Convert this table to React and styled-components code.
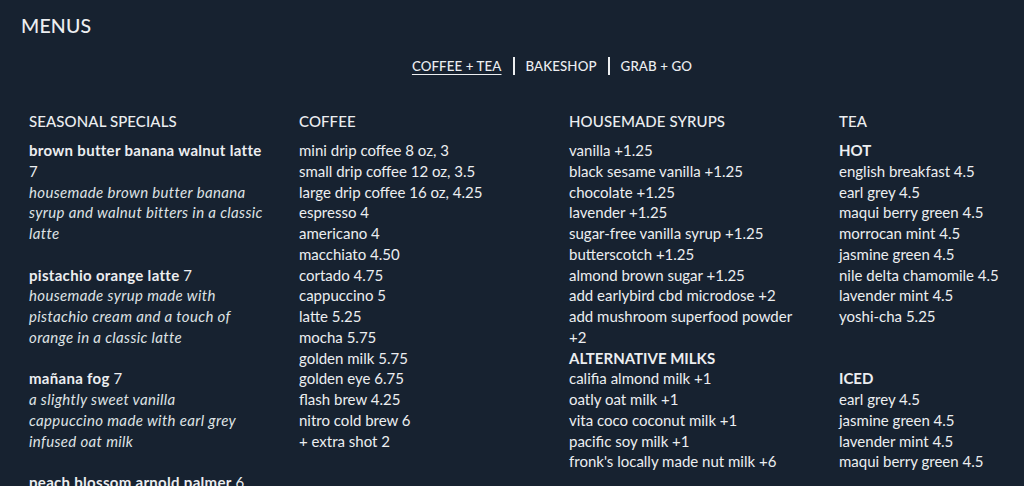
import React from 'react';
import styled, { createGlobalStyle } from 'styled-components';

const GlobalStyle = createGlobalStyle`
  html, body {
    margin: 0;
    padding: 0;
    background-color: #172230;
    overflow: hidden;
  }
  body {
    font-family: Lato, "Open Sans", sans-serif;
    color: #eceef0;
  }
`;

const Page = styled.div`
  width: 1024px;
  height: 486px;
  overflow: hidden;
  background-color: #172230;
`;

const Title = styled.h1`
  margin: 0;
  padding: 14px 0 0 21px;
  font-size: 19.5px;
  font-weight: 500;
  line-height: 24px;
  letter-spacing: 0.2px;
`;

const Nav = styled.nav`
  display: flex;
  justify-content: center;
  align-items: center;
  padding: 18px 0 0 80px;
  height: 20px;
`;

const NavLink = styled.a`
  font-size: 13.3px;
  font-weight: 500;
  color: #eceef0;
  text-decoration: ${(p) => (p.$active ? 'underline' : 'none')};
  text-underline-offset: 3px;
  text-decoration-thickness: 1px;
  letter-spacing: 0.1px;
`;

const Divider = styled.span`
  display: block;
  width: 2px;
  height: 18px;
  margin: 0 11px;
  background-color: #eceef0;
`;

const Grid = styled.div`
  display: grid;
  grid-template-columns: repeat(4, 240px);
  column-gap: 30px;
  padding: 35px 0 0 29px;
`;

const Column = styled.section`
  display: flex;
  flex-direction: column;
`;

const Heading = styled.h2`
  margin: 0 0 9px;
  font-size: 15px;
  font-weight: 500;
  line-height: 20px;
  letter-spacing: 0.1px;
`;

const SubHeading = styled.h3`
  margin: ${(p) => (p.$gap ? '41.5px 0 0' : '0')};
  font-size: 15px;
  font-weight: 700;
  line-height: 20.75px;
`;

const Item = styled.div`
  font-size: 15px;
  line-height: 20.75px;
`;

const Special = styled.div`
  font-size: 15px;
  line-height: 20.75px;
  margin-bottom: 20.75px;
`;

const Name = styled.span`
  font-weight: 700;
  letter-spacing: 0.3px;
`;

const Desc = styled.div`
  font-style: italic;
  color: #dfe2e5;
  letter-spacing: 0.35px;
`;

const specials = [
  {
    name: 'brown butter banana walnut latte',
    price: '7',
    desc: ['housemade brown butter banana', 'syrup and walnut bitters in a classic', 'latte'],
  },
  {
    name: 'pistachio orange latte',
    price: '7',
    desc: ['housemade syrup made with', 'pistachio cream and a touch of', 'orange in a classic latte'],
  },
  {
    name: 'mañana fog',
    price: '7',
    desc: ['a slightly sweet vanilla', 'cappuccino made with earl grey', 'infused oat milk'],
  },
  { name: 'peach blossom arnold palmer', price: '6', desc: [] },
];

const coffee = [
  'mini drip coffee 8 oz, 3',
  'small drip coffee 12 oz, 3.5',
  'large drip coffee 16 oz, 4.25',
  'espresso 4',
  'americano 4',
  'macchiato 4.50',
  'cortado 4.75',
  'cappuccino 5',
  'latte 5.25',
  'mocha 5.75',
  'golden milk 5.75',
  'golden eye 6.75',
  'flash brew 4.25',
  'nitro cold brew 6',
  '+ extra shot 2',
];

const syrups = [
  'vanilla +1.25',
  'black sesame vanilla +1.25',
  'chocolate +1.25',
  'lavender +1.25',
  'sugar-free vanilla syrup +1.25',
  'butterscotch +1.25',
  'almond brown sugar +1.25',
  'add earlybird cbd microdose +2',
  'add mushroom superfood powder +2',
];

const milks = [
  'califia almond milk +1',
  'oatly oat milk +1',
  'vita coco coconut milk +1',
  'pacific soy milk +1',
  "fronk's locally made nut milk +6",
];

const hotTea = [
  'english breakfast 4.5',
  'earl grey 4.5',
  'maqui berry green 4.5',
  'morrocan mint 4.5',
  'jasmine green 4.5',
  'nile delta chamomile 4.5',
  'lavender mint 4.5',
  'yoshi-cha 5.25',
];

const icedTea = [
  'earl grey 4.5',
  'jasmine green 4.5',
  'lavender mint 4.5',
  'maqui berry green 4.5',
];

function App() {
  return (
    <Page>
      <GlobalStyle />
      <Title>MENUS</Title>
      <Nav>
        <NavLink $active>COFFEE + TEA</NavLink>
        <Divider />
        <NavLink>BAKESHOP</NavLink>
        <Divider />
        <NavLink>GRAB + GO</NavLink>
      </Nav>
      <Grid>
        <Column>
          <Heading>SEASONAL SPECIALS</Heading>
          {specials.map((s) => (
            <Special key={s.name}>
              <Name>{s.name}</Name> {s.price}
              {s.desc.length > 0 && (
                <Desc>
                  {s.desc.map((line, i) => (
                    <React.Fragment key={i}>
                      {i > 0 && <br />}
                      {line}
                    </React.Fragment>
                  ))}
                </Desc>
              )}
            </Special>
          ))}
        </Column>
        <Column>
          <Heading>COFFEE</Heading>
          {coffee.map((c) => (
            <Item key={c}>{c}</Item>
          ))}
        </Column>
        <Column>
          <Heading>HOUSEMADE SYRUPS</Heading>
          {syrups.map((c) => (
            <Item key={c}>{c}</Item>
          ))}
          <SubHeading>ALTERNATIVE MILKS</SubHeading>
          {milks.map((c) => (
            <Item key={c}>{c}</Item>
          ))}
        </Column>
        <Column>
          <Heading>TEA</Heading>
          <SubHeading>HOT</SubHeading>
          {hotTea.map((c) => (
            <Item key={c}>{c}</Item>
          ))}
          <SubHeading $gap>ICED</SubHeading>
          {icedTea.map((c) => (
            <Item key={c}>{c}</Item>
          ))}
        </Column>
      </Grid>
    </Page>
  );
}

export default App;
